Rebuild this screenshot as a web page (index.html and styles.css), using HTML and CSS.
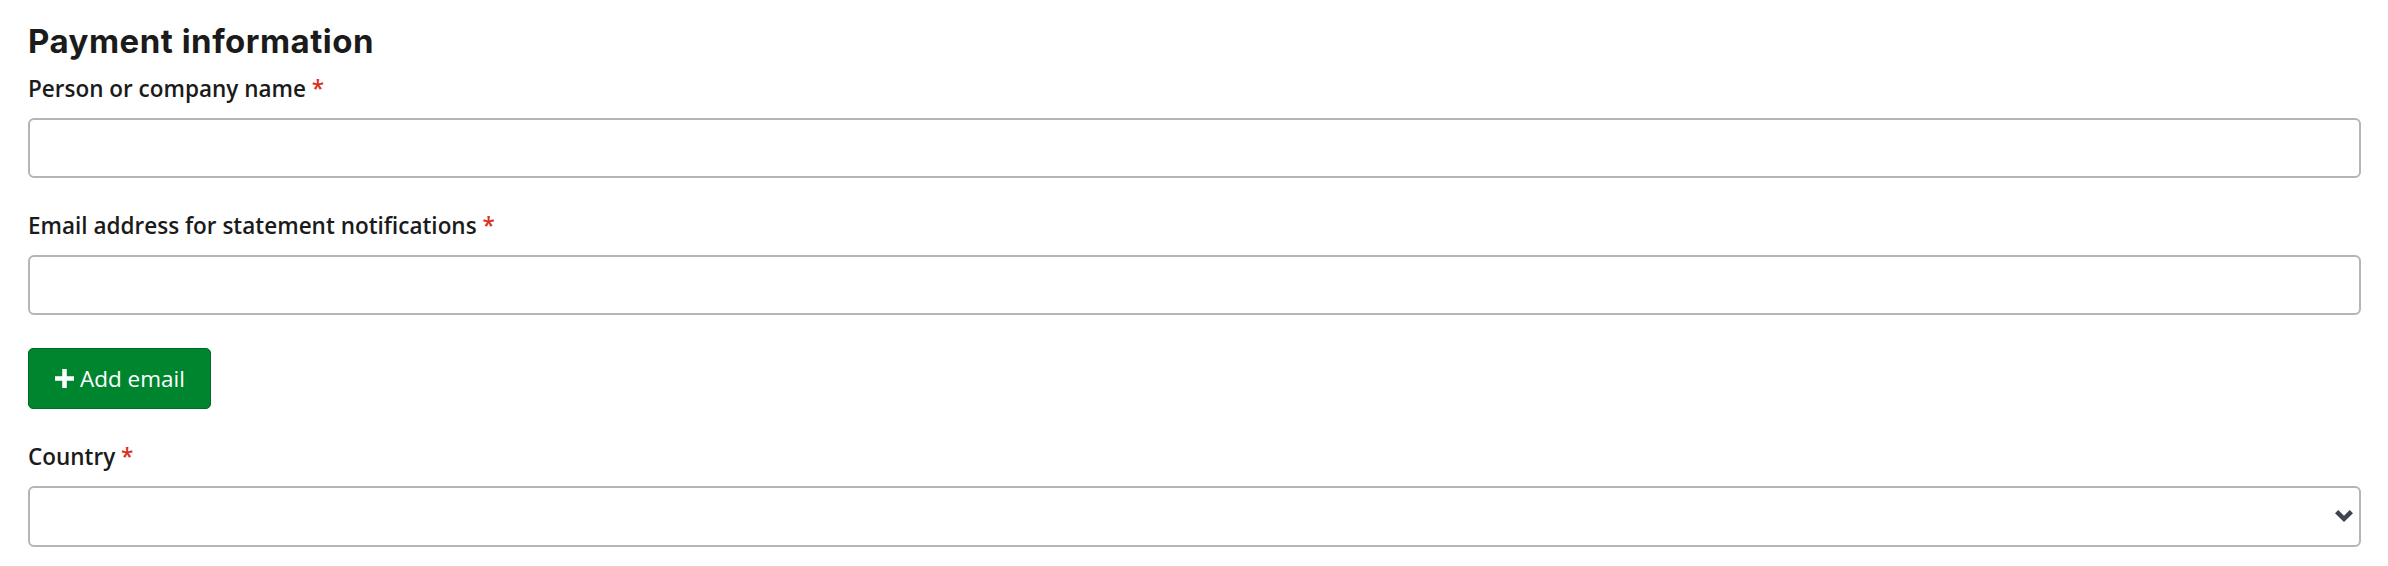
FILE: index.html
```html
<!doctype html>
<html>
<head>
  <meta charset="utf-8">
  <meta name="viewport" content="width=device-width, initial-scale=1">
  <title>Payment information</title>
  <link rel="stylesheet" href="styles.css">
</head>
<body>

  <form class="payment-form">
    <h2 class="form-title">Payment information</h2>

    <div class="field">
      <label class="field-label" for="payee-name">Person or company name <span class="required">*</span></label>
      <input class="field-input" id="payee-name" type="text">
    </div>

    <div class="field">
      <label class="field-label" for="payee-email">Email address for statement notifications <span class="required">*</span></label>
      <input class="field-input" id="payee-email" type="email">
    </div>

    <button class="btn-add" type="button">
      <svg class="btn-icon" viewBox="0 0 20 20" aria-hidden="true">
        <path d="M7.6 0h4.8v7.6H20v4.8h-7.6V20H7.6v-7.6H0V7.6h7.6z" fill="#fff"/>
      </svg>
      Add email
    </button>

    <div class="field">
      <label class="field-label" for="payee-country">Country <span class="required">*</span></label>
      <div class="select-wrap">
        <select class="field-input field-select" id="payee-country">
          <option></option>
        </select>
        <svg class="select-caret" viewBox="0 0 18 12" aria-hidden="true">
          <path d="M0 3.2 3.2 0 9 5.8 14.8 0 18 3.2 9 12z" fill="#3d4551"/>
        </svg>
      </div>
    </div>
  </form>

</body>
</html>
```

FILE: styles.css
```css
body {
  margin: 0;
  background: #fff;
  color: #1b1b1b;
  font-family: "Open Sans", "Noto Sans", sans-serif;
}

.payment-form {
  padding: 22px 27px 0 28px;
}

.form-title {
  margin: 0 0 13px;
  font-family: Inter, "Open Sans", sans-serif;
  font-weight: 700;
  font-size: 33px;
  line-height: 39px;
  letter-spacing: 0.5px;
}

.field {
  margin-bottom: 33px;
}

.field-label {
  display: block;
  margin-bottom: 14px;
  font-size: 22.5px;
  font-weight: 600;
  line-height: 30px;
}

.required {
  color: #db2f1e;
}

.field-input {
  display: block;
  box-sizing: border-box;
  width: 100%;
  height: 60px;
  margin: 0;
  padding: 0 14px;
  border: 2px solid #b5b5b5;
  border-radius: 6px;
  background: #fff;
  font: inherit;
  font-size: 22.5px;
}

.select-wrap {
  position: relative;
}

.field-select {
  -webkit-appearance: none;
  appearance: none;
  height: 61px;
}

.select-caret {
  position: absolute;
  right: 8px;
  top: 24px;
  width: 18px;
  height: 12px;
  pointer-events: none;
}

.btn-add {
  display: flex;
  align-items: center;
  gap: 6px;
  height: 61px;
  margin: 0 0 33px;
  padding: 0 25px 0 26px;
  border: 1px solid #006b25;
  border-radius: 5px;
  background: #00852f;
  color: #fff;
  font-family: "Open Sans", "Noto Sans", sans-serif;
  font-size: 22.5px;
  font-weight: 400;
}

.btn-icon {
  width: 19px;
  height: 19px;
}
```
